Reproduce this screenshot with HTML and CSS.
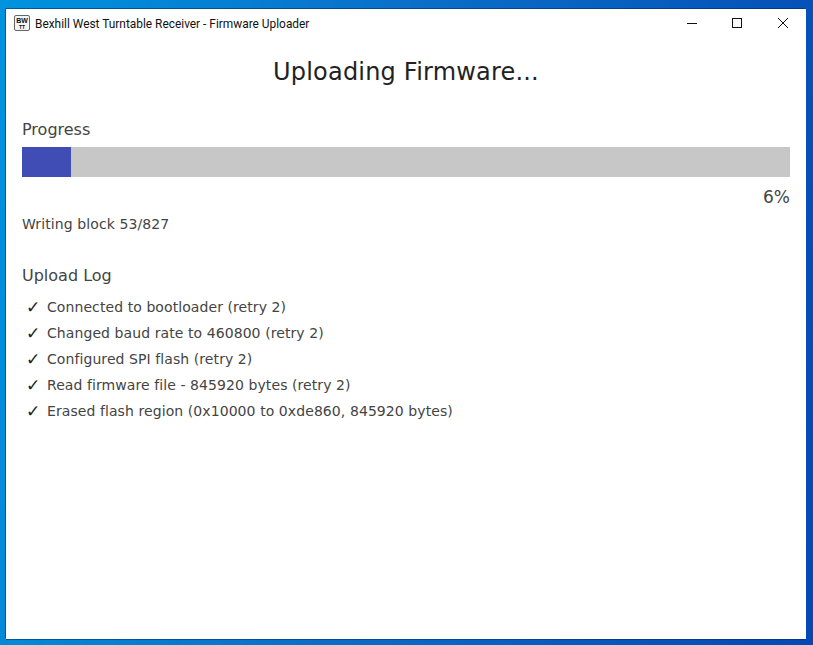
FILE: index.html
```html
<!DOCTYPE html>
<html lang="en">
<head>
<meta charset="utf-8">
<title>Bexhill West Turntable Receiver - Firmware Uploader</title>
<link rel="stylesheet" href="styles.css">
</head>
<body>
<div class="window">
  <header class="titlebar">
    <svg class="app-icon" width="16" height="16" viewBox="0 0 16 16">
      <rect x="0.5" y="0.5" width="15" height="15" rx="1.5" fill="#f4f4f4" stroke="#666"/>
      <text class="icon-bw" x="8" y="8">BW</text>
      <text class="icon-tt" x="8" y="13.5">TT</text>
    </svg>
    <span class="app-title">Bexhill West Turntable Receiver - Firmware Uploader</span>
    <div class="controls">
      <svg class="ctl" width="46" height="30" viewBox="0 0 46 30"><path d="M19 14.5h10" stroke="#111" fill="none"/></svg>
      <svg class="ctl" width="46" height="30" viewBox="0 0 46 30"><rect x="18.5" y="9.5" width="9" height="9" stroke="#111" fill="none"/></svg>
      <svg class="ctl" width="46" height="30" viewBox="0 0 46 30"><path d="M18 9l10 10M28 9l-10 10" stroke="#111" fill="none"/></svg>
    </div>
  </header>
  <main class="content">
    <h1 class="heading">Uploading Firmware...</h1>
    <h2 class="section">Progress</h2>
    <div class="bar"><div class="bar-fill" style="width:6.4%"></div></div>
    <div class="percent">6%</div>
    <p class="status">Writing block 53/827</p>
    <h2 class="section log-title">Upload Log</h2>
    <ul class="log">
      <li><span class="tick">✓</span>Connected to bootloader (retry 2)</li>
      <li><span class="tick">✓</span>Changed baud rate to 460800 (retry 2)</li>
      <li><span class="tick">✓</span>Configured SPI flash (retry 2)</li>
      <li><span class="tick">✓</span>Read firmware file - 845920 bytes (retry 2)</li>
      <li><span class="tick">✓</span>Erased flash region (0x10000 to 0xde860, 845920 bytes)</li>
    </ul>
  </main>
</div>
</body>
</html>
```
FILE: styles.css
```css
* { box-sizing: border-box; }
html, body { height: 100%; }
body {
  margin: 0;
  padding: 9px 7px 6px 6px;
  background: linear-gradient(100deg, #0093de 0%, #0a6fc8 45%, #0548b4 100%);
  overflow: hidden;
}
.window {
  height: 100%;
  background: #fff;
  display: flex;
  flex-direction: column;
  box-shadow: -1px -1px 0 rgba(0, 40, 90, 0.55), 0 1px 0 rgba(0, 40, 90, 0.5);
}
.titlebar {
  height: 30px;
  flex: none;
  display: flex;
  align-items: center;
  padding-left: 8px;
}
.app-icon { flex: none; margin-bottom: 2px; }
.icon-bw, .icon-tt {
  font-family: "Liberation Sans", sans-serif;
  font-weight: 700;
  fill: #111;
  text-anchor: middle;
}
.icon-bw { font-size: 7px; }
.icon-tt { font-size: 5px; }
.app-title {
  margin-left: 5px;
  font: 11.9px Roboto, "Open Sans", "Liberation Sans", sans-serif;
  color: #111;
}
.controls { margin-left: auto; display: flex; }
.ctl { display: block; }
.content {
  flex: 1;
  padding: 0 16px;
  font-family: "DejaVu Sans", Verdana, sans-serif;
  color: #444;
}
.heading {
  margin: 17px 0 0;
  font-size: 24px;
  line-height: 32px;
  font-weight: 400;
  letter-spacing: 0.2px;
  text-align: center;
  color: #222;
}
.section {
  margin: 0;
  font-size: 16px;
  line-height: 20px;
  font-weight: 400;
}
.heading + .section { margin-top: 32px; }
.bar {
  height: 30px;
  margin-top: 7px;
  background: #c7c7c7;
}
.bar-fill { height: 100%; background: #3f4db5; }
.percent {
  margin-top: 10px;
  text-align: right;
  font-size: 17px;
  line-height: 20px;
}
.status {
  margin: 7px 0 0;
  font-size: 14px;
  line-height: 20px;
  letter-spacing: 0.1px;
}
.log-title { margin-top: 32px; }
.log {
  list-style: none;
  margin: 8px 0 0;
  padding: 0 0 0 4px;
  font-size: 14px;
  letter-spacing: 0.08px;
}
.log li { height: 26px; line-height: 26px; display: flex; }
.tick { width: 21px; flex: none; font-size: 17px; color: #222; }
```
